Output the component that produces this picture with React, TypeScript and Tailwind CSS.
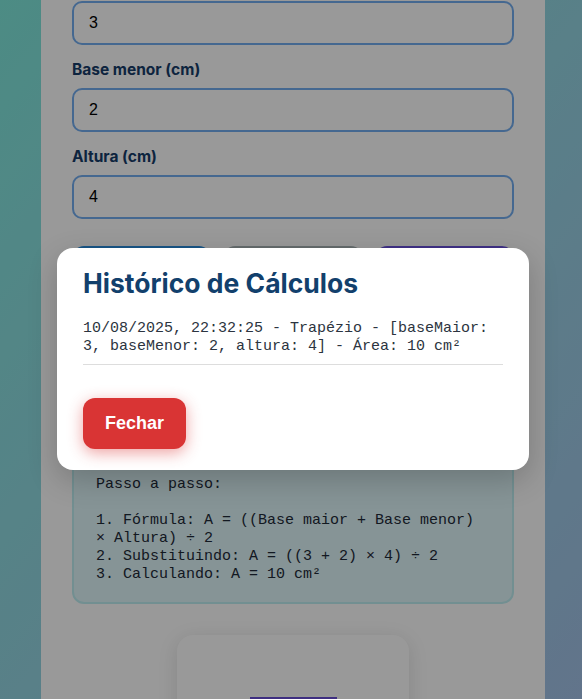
export default function App() {
  const mono = { fontFamily: '"Liberation Mono", "Courier New", monospace' };
  const head = { fontFamily: 'Inter, "Noto Sans", sans-serif' };

  const fields = [
    { label: "Base maior (cm)", value: "3" },
    { label: "Base menor (cm)", value: "2" },
    { label: "Altura (cm)", value: "4" },
  ];

  return (
    <div
      className="relative h-[699px] overflow-hidden bg-gradient-to-br from-[#7fe9dd] to-[#a3c2e8]"
      style={{ fontFamily: '"Liberation Sans", Arial, sans-serif' }}
    >
      {/* main card, scrolled so its top is out of view */}
      <div className="-mt-[42px] ml-[41px] w-[504px] bg-white px-[31px] pb-16">
        {fields.map((f, i) => (
          <div key={i} className="pt-[15px]">
            <label
              className="mb-[8px] block text-[15.5px] font-bold leading-[20px] text-[#163c69]"
              style={head}
            >
              {f.label}
            </label>
            <div className="flex h-[44px] items-center rounded-[10px] border-2 border-[#74aef0] px-[15px] text-[16px] text-black">
              {f.value}
            </div>
          </div>
        ))}

        {/* action buttons (covered by the modal) */}
        <div className="mt-[27px] grid grid-cols-3 gap-3">
          <button aria-label="Calcular" className="h-[48px] rounded-xl bg-[#2a8ee0]" />
          <button aria-label="Limpar" className="h-[48px] rounded-xl bg-[#a9b4b6]" />
          <button aria-label="Histórico" className="h-[48px] rounded-xl bg-[#6a52e0]" />
        </div>

        <div className="mt-[20px] h-[122px] rounded-xl bg-[#e8f5e9]" />

        <div className="mt-[20px] rounded-xl border-2 border-[#bfeef2] bg-[#dff7fa] px-[22px] py-[18px]">
          <pre
            className="whitespace-pre-wrap text-[15px] leading-[18px] text-[#1e2a38]"
            style={mono}
          >
            {"Passo a passo:\n\n1. Fórmula: A = ((Base maior + Base menor) × Altura) ÷ 2\n2. Substituindo: A = ((3 + 2) × 4) ÷ 2\n3. Calculando: A = 10 cm²"}
          </pre>
        </div>

        <div className="mx-auto mt-[31px] w-[232px] rounded-2xl bg-white pt-[62px] pb-6 shadow-[0_4px_20px_rgba(0,0,0,0.12)]">
          <div className="mx-auto h-[60px] w-[87px] bg-[#6a4fd8]" />
        </div>
      </div>

      {/* modal overlay */}
      <div className="absolute inset-0 bg-black/40">
        <div className="absolute left-[57px] top-[248px] w-[472px] rounded-2xl bg-white px-[26px] pt-[18px] pb-[21px] shadow-[0_10px_30px_rgba(0,0,0,0.2)]">
          <h2
            className="text-[26.5px] font-bold leading-[34px] text-[#12406c]"
            style={head}
          >
            Histórico de Cálculos
          </h2>
          <ul className="mt-[20px]">
            <li
              className="border-b border-[#dddddd] pb-[8px] text-[15px] leading-[18px] text-[#2c3440]"
              style={mono}
            >
              10/08/2025, 22:32:25 - Trapézio - [baseMaior: 3, baseMenor: 2,
              altura: 4] - Área: 10 cm²
            </li>
          </ul>
          <button className="mt-[33px] flex h-[51px] items-center rounded-xl bg-[#d93434] px-[22px] text-[18px] font-bold text-white shadow-[0_4px_15px_rgba(217,52,52,0.45)]">
            Fechar
          </button>
        </div>
      </div>
    </div>
  );
}
